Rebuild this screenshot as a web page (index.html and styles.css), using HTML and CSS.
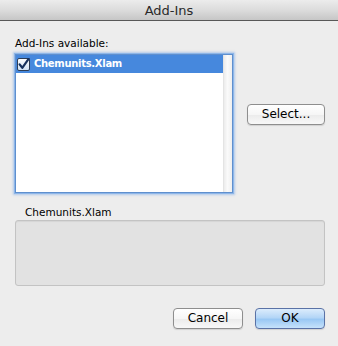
FILE: index.html
```html
<!DOCTYPE html>
<html>
<head>
<meta charset="utf-8">
<link rel="stylesheet" href="styles.css">
</head>
<body>
<div class="window">
  <div class="titlebar">Add-Ins</div>
  <div class="content">
    <div class="label">Add-Ins available:</div>
    <div class="list-row">
      <div class="listbox">
        <div class="items">
          <div class="item selected">
            <span class="check">
              <svg width="13" height="13" viewBox="0 0 13 13">
                <defs>
                  <linearGradient id="cb" x1="0" y1="0" x2="0" y2="1">
                    <stop offset="0" stop-color="#ffffff"/>
                    <stop offset="1" stop-color="#cddff4"/>
                  </linearGradient>
                </defs>
                <rect x="0.5" y="0.5" width="12" height="12" rx="1.5" fill="url(#cb)" stroke="#2d3d55"/>
                <path d="M2.6 6.4 L5.3 9.8 L11.6 0.8" fill="none" stroke="#17315e" stroke-width="2.2" stroke-linecap="round" stroke-linejoin="round"/>
              </svg>
            </span>
            <span class="item-text">Chemunits.Xlam</span>
          </div>
        </div>
        <div class="scrolltrack"></div>
      </div>
      <button class="btn select">Select...</button>
    </div>
    <div class="desc-label">Chemunits.Xlam</div>
    <div class="desc-box"></div>
    <div class="actions">
      <button class="btn">Cancel</button>
      <button class="btn default">OK</button>
    </div>
  </div>
</div>
</body>
</html>
```
FILE: styles.css
```css
html, body {
  margin: 0;
  padding: 0;
}
body {
  width: 338px;
  height: 346px;
  overflow: hidden;
  background: #ededed;
  font-family: "DejaVu Sans", "Liberation Sans", sans-serif;
  color: #000;
}
.window {
  display: flex;
  flex-direction: column;
  height: 346px;
}
.titlebar {
  height: 20px;
  border-bottom: 1px solid #585858;
  background: linear-gradient(to bottom, #ececec 0%, #dcdcdc 50%, #c6c6c6 100%);
  text-align: center;
  font-size: 13px;
  line-height: 21px;
  color: #2a2a2a;
}
.content {
  display: flex;
  flex-direction: column;
  padding: 16px 13px 0 15px;
}
.label {
  font-size: 10.5px;
  line-height: 13px;
  height: 13px;
  margin-bottom: 4px;
}
.list-row {
  display: flex;
  align-items: flex-start;
}
.listbox {
  width: 216px;
  height: 137px;
  border: 1px solid #5f8fce;
  box-shadow: 0 0 0 1px #8db6e8, 0 0 2px 2px rgba(125, 170, 230, 0.55);
  background: #fff;
  display: flex;
}
.items {
  flex: 1;
  display: flex;
  flex-direction: column;
}
.item {
  height: 18px;
  display: flex;
  align-items: center;
  padding-left: 1px;
}
.item.selected {
  background: #4688dd;
  color: #fff;
}
.check {
  width: 13px;
  height: 13px;
  display: flex;
}
.item-text {
  margin-left: 4px;
  font-size: 10px;
  font-weight: bold;
  letter-spacing: -0.3px;
  line-height: 18px;
}
.scrolltrack {
  width: 9px;
  background: linear-gradient(to right, #dcdcdc 0, #ececec 1px, #fafafa 50%, #efefef 100%);
}
.btn {
  font-family: "DejaVu Sans", "Liberation Sans", sans-serif;
  font-size: 12px;
  color: #000;
  height: 21px;
  padding: 0;
  border: 1px solid #8e8e8e;
  border-radius: 4px;
  background: linear-gradient(to bottom, #ffffff 0%, #f6f6f6 50%, #ebebeb 51%, #f8f8f8 100%);
  box-shadow: 0 1px 1px rgba(0, 0, 0, 0.12);
  line-height: 19px;
}
.btn.select {
  width: 78px;
  margin-left: 14px;
  margin-top: 50px;
}
.desc-label {
  font-size: 10.5px;
  line-height: 13px;
  height: 13px;
  margin-top: 13px;
  margin-left: 10px;
}
.desc-box {
  margin-top: 1px;
  height: 64px;
  width: 308px;
  border: 1px solid #c3c3c3;
  border-radius: 3px;
  background: #e2e2e2;
  box-shadow: inset 0 1px 1px rgba(0, 0, 0, 0.06);
}
.actions {
  display: flex;
  justify-content: flex-end;
  gap: 12px;
  margin-top: 22px;
}
.actions .btn {
  width: 70px;
}
.btn.default {
  border-color: #5a72a6;
  background: linear-gradient(to bottom, #dcecfc 0%, #b4d6f7 45%, #9ac8f4 55%, #c6e2fb 100%);
}
```
